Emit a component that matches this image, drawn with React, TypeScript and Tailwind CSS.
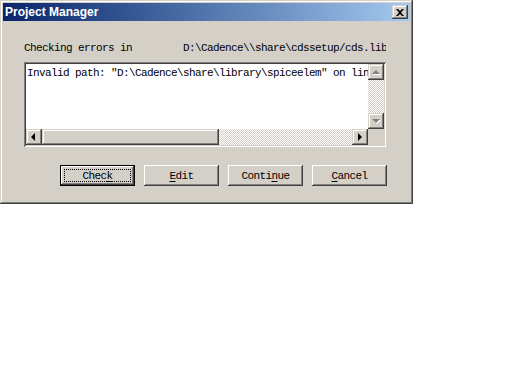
const mono = "font-['Liberation_Mono',monospace] text-[11px] tracking-[-0.6px] leading-[12px] text-black";
const raised = "shadow-[inset_-1px_-1px_#404040,inset_1px_1px_#ffffff,inset_-2px_-2px_#808080,inset_2px_2px_#d4d0c8]";
const sbBtn = "shadow-[inset_-1px_-1px_#404040,inset_1px_1px_#d4d0c8,inset_-2px_-2px_#808080,inset_2px_2px_#ffffff]";
const checker = "bg-[image:repeating-conic-gradient(#d4d0c8_0%_25%,#ffffff_0%_50%)] bg-[length:2px_2px]";

function Arrow({ dir, disabled }: { dir: "up" | "down" | "left" | "right"; disabled?: boolean }) {
  const pts = {
    up: "4,1 0,5 8,5",
    down: "0,1 8,1 4,5",
    left: "4,0 4,8 0,4",
    right: "1,0 1,8 5,4",
  }[dir];
  const vertical = dir === "up" || dir === "down";
  return (
    <svg width={vertical ? 9 : 6} height={vertical ? 6 : 9} viewBox={vertical ? "0 0 9 6" : "0 0 6 9"}>
      {disabled && <polygon points={pts} fill="#ffffff" transform="translate(1,1)" />}
      <polygon points={pts} fill={disabled ? "#808080" : "#000000"} />
    </svg>
  );
}

function SbButton({ dir, disabled }: { dir: "up" | "down" | "left" | "right"; disabled?: boolean }) {
  return (
    <div className={`w-4 h-4 shrink-0 bg-[#d4d0c8] flex items-center justify-center ${sbBtn}`}>
      <Arrow dir={dir} disabled={disabled} />
    </div>
  );
}

function Button({ label, u, isDefault }: { label: string; u: number; isDefault?: boolean }) {
  const text = (
    <span className={mono}>
      {label.slice(0, u)}
      <span className="underline underline-offset-2">{label[u]}</span>
      {label.slice(u + 1)}
    </span>
  );
  if (isDefault) {
    return (
      <div className="w-[75px] h-[21px] border border-black bg-[#d4d0c8]">
        <div className={`w-full h-full flex items-center justify-center ${raised} p-[3px]`}>
          <div className="w-full h-full border border-dotted border-black flex items-center justify-center">{text}</div>
        </div>
      </div>
    );
  }
  return (
    <div className={`w-[75px] h-[21px] bg-[#d4d0c8] flex items-center justify-center ${raised}`}>{text}</div>
  );
}

export default function App() {
  return (
    <div className="w-[512px] h-[384px] bg-white">
      <div className="w-[413px] h-[204px] bg-[#d4d0c8] shadow-[inset_-1px_-1px_#404040,inset_1px_1px_#d4d0c8,inset_-2px_-2px_#808080,inset_2px_2px_#ffffff] p-[3px] flex flex-col">
        <div className="h-[18px] shrink-0 bg-gradient-to-r from-[#0a246a] to-[#a6caf0] flex items-center justify-between pl-[2px] pr-[2px]">
          <span className="font-['Liberation_Sans',sans-serif] font-bold text-[12px] text-white leading-none">Project Manager</span>
          <div className={`w-4 h-[14px] bg-[#d4d0c8] flex items-center justify-center ${sbBtn}`}>
            <svg width="8" height="7" viewBox="0 0 8 7">
              <path d="M0 0h2l2 2 2-2h2L5 3.5 8 7H6L4 5 2 7H0l3-3.5z" fill="#000" />
            </svg>
          </div>
        </div>
        <div className="pl-[21px] pt-[21px]">
          <div className={`flex ${mono}`}>
            <span className="w-[159px] shrink-0">Checking errors in</span>
            <span className="whitespace-nowrap overflow-hidden w-[203px]">D:\Cadence\\share\cdssetup/cds.lib</span>
          </div>
          <div className="mt-[8px] w-[362px] h-[85px] bg-white shadow-[inset_1px_1px_#808080,inset_-1px_-1px_#ffffff,inset_2px_2px_#404040,inset_-2px_-2px_#d4d0c8] p-[2px]">
            <div className="grid grid-cols-[1fr_16px] grid-rows-[1fr_16px] w-full h-full">
              <div className={`overflow-hidden whitespace-nowrap pl-[1px] pt-[3px] ${mono}`}>
                Invalid path: "D:\Cadence\share\library\spiceelem" on line
              </div>
              <div className="flex flex-col">
                <SbButton dir="up" disabled />
                <div className={`flex-1 ${checker}`} />
                <SbButton dir="down" disabled />
              </div>
              <div className="flex">
                <SbButton dir="left" />
                <div className={`w-[177px] shrink-0 bg-[#d4d0c8] ${sbBtn}`} />
                <div className={`flex-1 ${checker}`} />
                <SbButton dir="right" />
              </div>
              <div className="bg-[#d4d0c8]" />
            </div>
          </div>
          <div className="flex gap-[9px] mt-[18px] ml-[36px]">
            <Button label="Check" u={4} isDefault />
            <Button label="Edit" u={0} />
            <Button label="Continue" u={5} />
            <Button label="Cancel" u={0} />
          </div>
        </div>
      </div>
    </div>
  );
}
